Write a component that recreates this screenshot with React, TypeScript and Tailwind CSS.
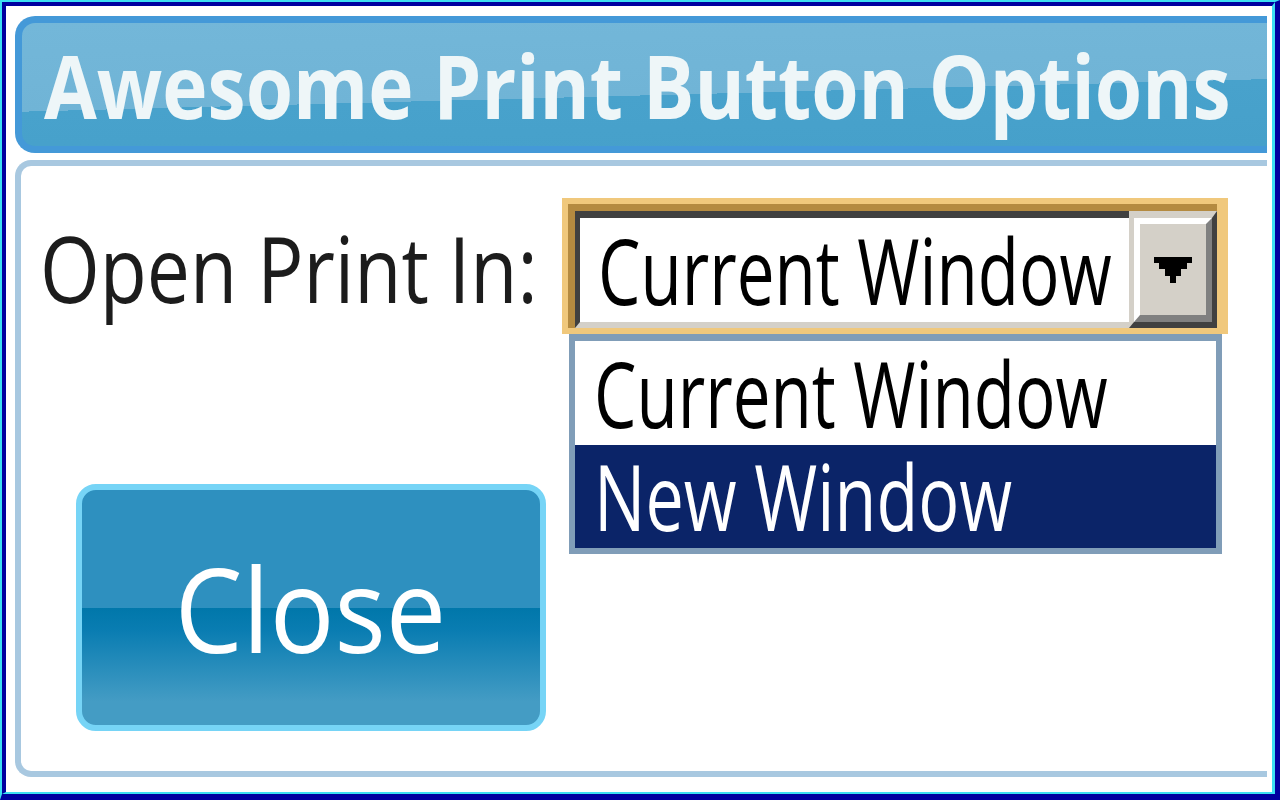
import React from 'react';

const font = { fontFamily: '"Open Sans", "Noto Sans", sans-serif' };

const Arrow = () => (
  <svg width="38" height="26" viewBox="0 0 38 26" fill="#000">
    <rect x="0" y="0" width="38" height="6" />
    <rect x="5" y="6" width="28" height="6" />
    <rect x="11" y="12" width="16" height="7" />
    <rect x="16" y="19" width="6" height="7" />
  </svg>
);

const SelectBox = () => (
  <div className="relative">
    <div className="border-[6px] border-r-[11px] border-[#f0c87c]">
      <div className="flex border-t-[7px] border-l-[7px] border-[#b48a40]">
        <div className="flex h-[117px] w-[554px] items-center border-t-[7px] border-l-[5px] border-b-[6px] border-[#404040] border-b-[#d4d0c8] bg-white pl-[18px]">
          <span className="inline-block origin-left scale-x-[0.74] whitespace-nowrap text-[91px] leading-none text-black">
            Current Window
          </span>
        </div>
        <div className="h-[117px] w-[88px] border-t-[7px] border-l-[5px] border-b-[6px] border-r-[5px] border-t-[#d4d0c8] border-l-[#d4d0c8] border-b-[#404040] border-r-[#404040]">
          <div className="flex h-full w-full items-center justify-center border-t-[6px] border-l-[6px] border-r-[6px] border-b-[7px] border-t-white border-l-white border-r-[#808080] border-b-[#808080] bg-[#d4d0c8]">
            <Arrow />
          </div>
        </div>
      </div>
    </div>
    <div className="absolute left-[7px] top-full w-[653px] border-[6px] border-t-[7px] border-[#809db8] bg-white">
      <div className="flex h-[104px] items-center pl-[19px]">
        <span className="inline-block origin-left scale-x-[0.74] whitespace-nowrap text-[91px] leading-none text-black">
          Current Window
        </span>
      </div>
      <div className="flex h-[103px] items-center bg-[#0b2468] pl-[19px]">
        <span className="inline-block origin-left scale-x-[0.75] whitespace-nowrap text-[91px] leading-none text-white">
          New Window
        </span>
      </div>
    </div>
  </div>
);

export default function App() {
  return (
    <div className="h-[800px] w-[1280px] overflow-hidden" style={font}>
      <div className="h-full w-full border-t-2 border-l-2 border-r-[5px] border-b-[6px] border-t-[#3cdff2] border-l-[#3cdff2] border-r-[#0000a0] border-b-[#0000a0]">
        <div className="flex h-full w-full flex-col overflow-hidden border-t-4 border-l-4 border-r-[3px] border-b-2 border-t-[#0000a0] border-l-[#0000a0] border-r-[#3cdff2] border-b-[#3cdff2] bg-white pl-[9px] pr-[5px] pt-[10px]">
          <div
            className="flex h-[137px] shrink-0 items-center rounded-l-[20px] border-[7px] border-r-0 border-[#4499d8] pl-[22px]"
            style={{
              background:
                'linear-gradient(178.5deg, #73b7d9 0%, #70b4d6 57%, #48a2cc 57%, #46a0ca 100%)',
            }}
          >
            <span className="inline-block origin-left scale-x-[0.87] whitespace-nowrap text-[88px] font-bold leading-none text-[#eef6f8]">
              Awesome Print Button Options
            </span>
          </div>

          <div className="mt-[7px] h-[617px] shrink-0 rounded-l-[16px] border-[6px] border-r-0 border-[#a8c8e0] pl-[19px] pt-[32px]">
            <div className="flex items-center">
              <div className="w-[522px] pt-[4px]">
                <span className="inline-block origin-left scale-x-[0.845] whitespace-nowrap text-[91px] leading-none text-[#1c1c1c]">
                  Open Print In:
                </span>
              </div>
              <SelectBox />
            </div>

            <button
              className="ml-[36px] mt-[150px] flex h-[247px] w-[470px] items-center justify-center rounded-[20px] border-[6px] border-[#76d4f6] text-white"
              style={{
                background:
                  'linear-gradient(to bottom, #2e90bf 0%, #2e90bf 50%, #0077aa 50%, #0a7db2 60%, #449cc4 90%, #449cc4 100%)',
              }}
            >
              <span className="inline-block scale-x-[0.92] text-[117px] leading-none">Close</span>
            </button>
          </div>
        </div>
      </div>
    </div>
  );
}
